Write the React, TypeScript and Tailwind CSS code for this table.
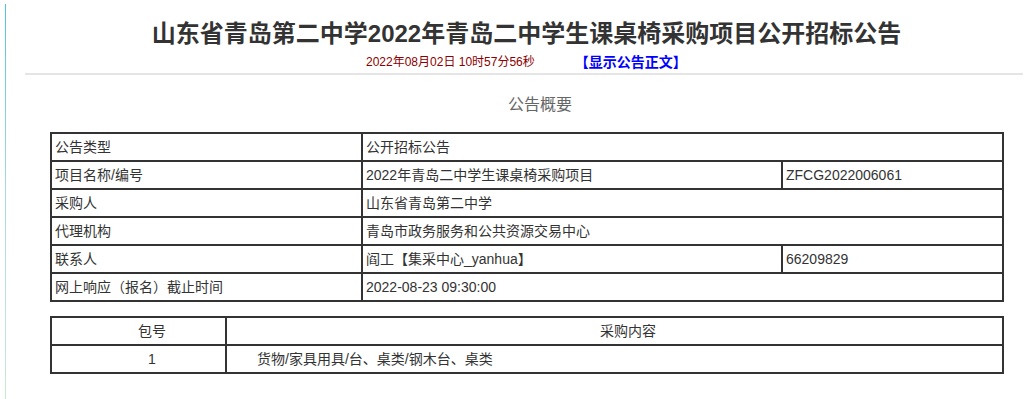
import React from "react";

const font = { fontFamily: '"Liberation Sans", "Noto Sans CJK SC", sans-serif' };

const td = "border-2 border-[#333] h-[28px] px-[3px] py-0 text-[14px] text-[#333] leading-[24px] align-middle";
const td2 = "border-2 border-[#333] h-[28px] pl-[30px] pr-[3px] py-0 text-[14px] text-[#333] leading-[24px] align-middle";

export default function App() {
  return (
    <div className="flex w-[1035px] h-[399px] bg-white overflow-hidden" style={font}>
      <div className="w-[5px] shrink-0" />
      <div className="w-[1px] shrink-0 mt-[4px] bg-gradient-to-b from-[#4fc3e0] via-[#a8dbe6] to-[#c9ead2]" />
      <div className="flex flex-col ml-[19px] w-[998px]">
        <h1 className="text-center text-[24px] font-bold text-[#333] leading-[30px] mt-[19px] pl-[5px]">
          山东省青岛第二中学2022年青岛二中学生课桌椅采购项目公开招标公告
        </h1>
        <div className="flex items-center mt-[4px] h-[18px] pl-[341px]">
          <span className="text-[12px] text-[#8b0000]">2022年08月02日 10时57分56秒</span>
          <span className="text-[14px] font-bold text-[#0000ff] ml-[40px]">【显示公告正文】</span>
        </div>
        <div className="h-[2px] bg-[#e5e5e5] mt-[2px]" />
        <div className="text-center text-[16px] text-[#666] mt-[19px] leading-[22px] pl-[32px]">公告概要</div>
        <table className="border-collapse ml-[25px] mt-[16px] w-[952px] table-fixed">
          <colgroup>
            <col className="w-[311px]" />
            <col className="w-[420px]" />
            <col className="w-[221px]" />
          </colgroup>
          <tbody>
            <tr>
              <td className={td}>公告类型</td>
              <td className={td} colSpan={2}>公开招标公告</td>
            </tr>
            <tr>
              <td className={td}>项目名称/编号</td>
              <td className={td}>2022年青岛二中学生课桌椅采购项目</td>
              <td className={td}>ZFCG2022006061</td>
            </tr>
            <tr>
              <td className={td}>采购人</td>
              <td className={td} colSpan={2}>山东省青岛第二中学</td>
            </tr>
            <tr>
              <td className={td}>代理机构</td>
              <td className={td} colSpan={2}>青岛市政务服务和公共资源交易中心</td>
            </tr>
            <tr>
              <td className={td}>联系人</td>
              <td className={td}>阎工【集采中心_yanhua】</td>
              <td className={td}>66209829</td>
            </tr>
            <tr>
              <td className={td}>网上响应（报名）截止时间</td>
              <td className={td} colSpan={2}>2022-08-23 09:30:00</td>
            </tr>
          </tbody>
        </table>
        <table className="border-collapse ml-[25px] mt-[14px] w-[952px] table-fixed">
          <colgroup>
            <col className="w-[175px]" />
            <col className="w-[777px]" />
          </colgroup>
          <tbody>
            <tr>
              <td className={td2 + " text-center"}>包号</td>
              <td className={td2 + " text-center"}>采购内容</td>
            </tr>
            <tr>
              <td className={td2 + " text-center"}>1</td>
              <td className={td2}>货物/家具用具/台、桌类/钢木台、桌类</td>
            </tr>
          </tbody>
        </table>
      </div>
    </div>
  );
}
